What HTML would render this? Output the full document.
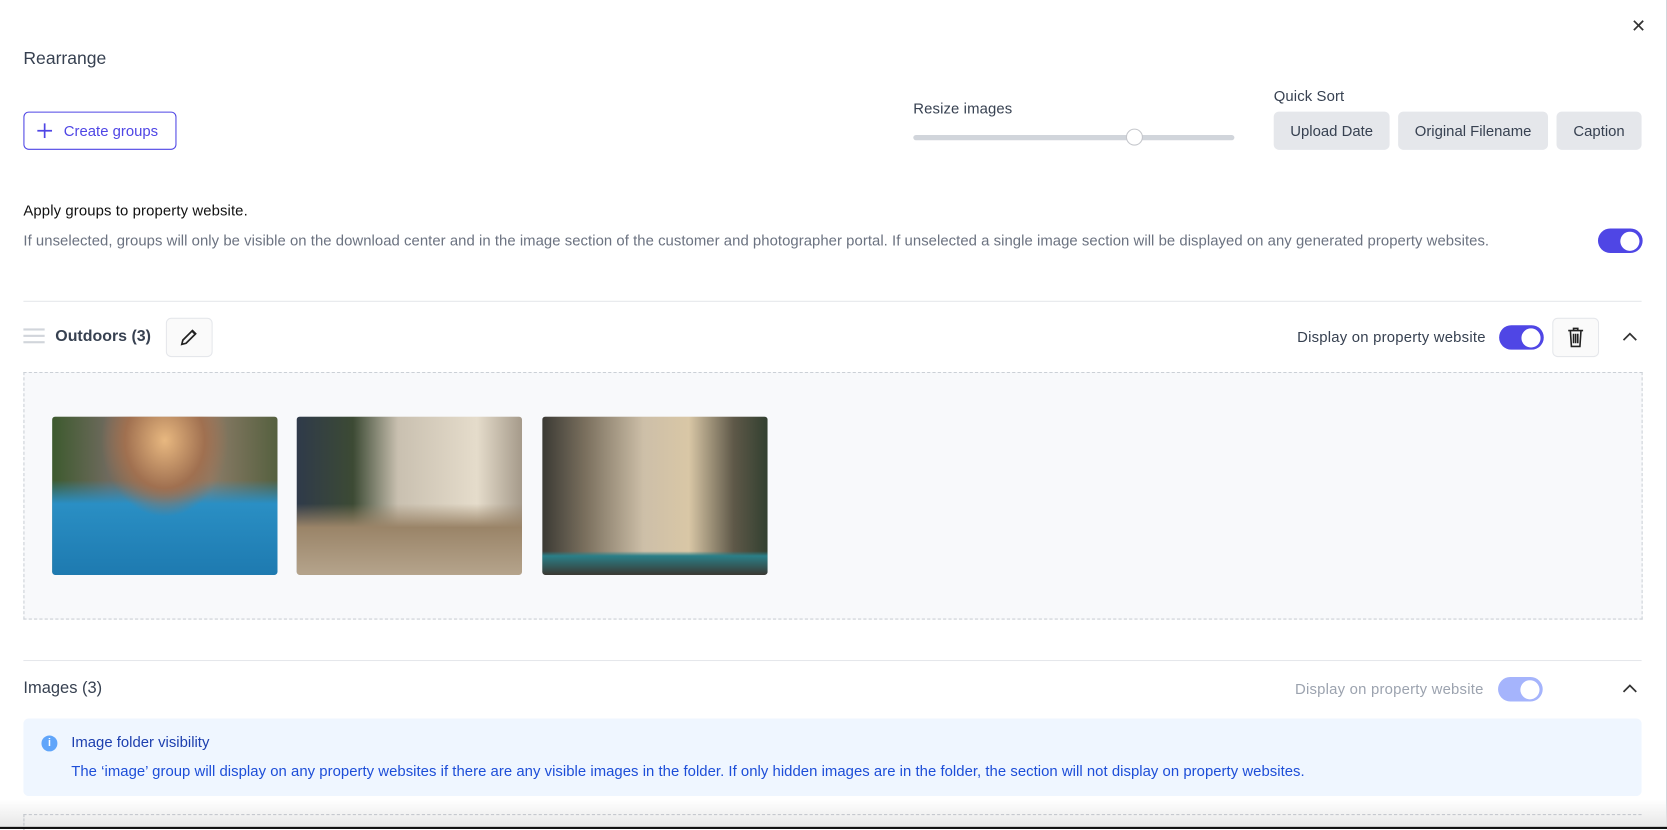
<!DOCTYPE html>
<html><head><meta charset="utf-8"><style>
html,body{margin:0;padding:0;width:1667px;height:829px;overflow:hidden;background:#fff;}
#s{position:absolute;left:0;top:0;width:1568px;height:780px;transform:scale(1.0632,1.0628);transform-origin:0 0;font-family:"Liberation Sans",sans-serif;color:#374151;}
.a{position:absolute;}
.t{font-size:14px;letter-spacing:0.1px;}
.btn{position:absolute;background:#e5e7eb;border-radius:5px;font-size:14px;color:#374151;display:flex;align-items:center;justify-content:center;}
.tog{position:absolute;width:42px;height:23px;border-radius:12px;background:#4f46e5;}
.tog::after{content:"";position:absolute;right:3px;top:2.5px;width:18px;height:18px;border-radius:50%;background:#fff;}
.img{position:absolute;top:392px;width:212px;height:149px;border-radius:3px;overflow:hidden;}
</style></head><body><div id="s">
<div class="a" style="right:0;top:0;width:1px;height:780px;background:#d1d5db"></div>
<div class="a" style="left:1534px;top:15px;font-size:17px;color:#333">✕</div>
<div class="a" style="left:22px;top:46px;font-size:16.5px;color:#374151">Rearrange</div>
<div class="a" style="left:22px;top:105px;width:142px;height:34px;border:1px solid #4f46e5;border-radius:5px;color:#4f46e5;font-size:14px;">
<svg class="a" style="left:12px;top:10px" width="14" height="14" viewBox="0 0 14 14"><path d="M7 0v14M0 7h14" stroke="#4f46e5" stroke-width="1.6"/></svg>
<span class="a" style="left:37px;top:9px">Create groups</span></div>
<div class="a t" style="left:859px;top:94px">Resize images</div>
<div class="a" style="left:859px;top:127px;width:302px;height:5px;border-radius:3px;background:#d1d5db"></div>
<div class="a" style="left:1059px;top:121px;width:14px;height:14px;border-radius:50%;background:#fff;border:1px solid #c5c7cc"></div>
<div class="a t" style="left:1198px;top:82px">Quick Sort</div>
<div class="btn" style="left:1198px;top:105px;width:109px;height:36px">Upload Date</div>
<div class="btn" style="left:1315px;top:105px;width:141px;height:36px">Original Filename</div>
<div class="btn" style="left:1464px;top:105px;width:80px;height:36px">Caption</div>
<div class="a t" style="left:22px;top:190px;color:#111">Apply groups to property website.</div>
<div class="a" style="left:22px;top:218px;font-size:14px;letter-spacing:0.04px;color:#6b7280;white-space:nowrap">If unselected, groups will only be visible on the download center and in the image section of the customer and photographer portal. If unselected a single image section will be displayed on any generated property websites.</div>
<div class="tog" style="left:1503px;top:215px"></div>
<div class="a" style="left:22px;top:283px;width:1522px;height:1px;background:#e5e7eb"></div>
<div class="a" style="left:22px;top:309px;width:20px;height:2px;background:#d1d5db;box-shadow:0 6px 0 #d1d5db,0 12px 0 #d1d5db"></div>
<div class="a" style="left:52px;top:308px;font-size:15px;font-weight:bold;color:#374151">Outdoors (3)</div>
<div class="a" style="left:156px;top:299px;width:42px;height:35px;border:1px solid #e5e7eb;border-radius:5px;background:#fafafa">
<svg class="a" style="left:12px;top:8px" width="18" height="18" viewBox="0 0 18 18"><path d="M2 16l1-4L12 3l3 3-9 9z" fill="none" stroke="#222" stroke-width="1.6"/><path d="M11 4l3 3L15.5 5.5l-3-3z" fill="#222"/></svg></div>
<div class="a" style="left:1220px;top:309px;font-size:14px;letter-spacing:0.2px;color:#374151">Display on property website</div>
<div class="tog" style="left:1410px;top:306px"></div>
<div class="a" style="left:1460px;top:299px;width:42px;height:35px;border:1px solid #e5e7eb;border-radius:5px;background:#fafafa">
<svg class="a" style="left:13px;top:8px" width="16" height="19" viewBox="0 0 16 19"><path d="M1 3h14M6 3V1h4v2M3 3l1 15h8l1-15M6 6v9M8 6v9M10 6v9" fill="none" stroke="#222" stroke-width="1.5"/></svg></div>
<svg class="a" style="left:1526px;top:312px" width="14" height="9" viewBox="0 0 14 9"><path d="M1 8l6-6 6 6" fill="none" stroke="#333" stroke-width="1.6"/></svg>
<div class="a" style="left:22px;top:350px;width:1521px;height:231px;border:1px dashed #cbd0d6;background:#f8f9fb"></div>
<div class="img" style="left:49px;background:radial-gradient(ellipse at 50% 15%,#e8b880 0,#a07050 25%,transparent 40%),linear-gradient(180deg,transparent 40%,#2a8fc4 55%,#1e7ab0 100%),linear-gradient(90deg,#3d5a2e 0,#6f6a5e 25%,#8c7c68 70%,#55603f 100%)"></div>
<div class="img" style="left:279px;background:linear-gradient(180deg,transparent 55%,#9a8468 70%,#b5a48c 100%),linear-gradient(90deg,#2f3a4a 0,#3c4a34 25%,#c9c0b0 45%,#e5dccb 80%,#a59a8a 100%)"></div>
<div class="img" style="left:510px;background:linear-gradient(180deg,transparent 85%,#2a7f88 88%,#3a3832 100%),linear-gradient(90deg,#3b3a34 0,#7d7260 20%,#cdbfa8 45%,#d9c7a6 65%,#5e5848 85%,#324030 100%)"></div>
<div class="a" style="left:22px;top:621px;width:1522px;height:1px;background:#e5e7eb"></div>
<div class="a" style="left:22px;top:639px;font-size:15.5px;color:#374151">Images (3)</div>
<div class="a" style="left:1218px;top:640px;font-size:14px;letter-spacing:0.2px;color:#9ca3af">Display on property website</div>
<div class="tog" style="left:1409px;top:637px;background:#a5b4fc"></div>
<svg class="a" style="left:1526px;top:643px" width="14" height="9" viewBox="0 0 14 9"><path d="M1 8l6-6 6 6" fill="none" stroke="#333" stroke-width="1.6"/></svg>
<div class="a" style="left:22px;top:676px;width:1522px;height:73px;border-radius:5px;background:#eff6ff"></div>
<div class="a" style="left:39px;top:692px;width:15px;height:15px;border-radius:50%;background:#60a5fa;color:#fff;font-size:10px;font-weight:bold;text-align:center;line-height:15px">i</div>
<div class="a" style="left:67px;top:690px;font-size:14px;color:#1e40af">Image folder visibility</div>
<div class="a" style="left:67px;top:717px;font-size:14px;letter-spacing:0.03px;color:#1d4ed8;white-space:nowrap">The ‘image’ group will display on any property websites if there are any visible images in the folder. If only hidden images are in the folder, the section will not display on property websites.</div>
<div class="a" style="left:0;top:752px;width:1568px;height:28px;background:linear-gradient(180deg,rgba(255,255,255,0),#e5e5e5)"></div>
<div class="a" style="left:22px;top:766px;width:1521px;height:14px;border-top:1px dashed #c0c4ca;border-left:1px dashed #c0c4ca"></div>
<div class="a" style="left:0;top:778px;width:1568px;height:2px;background:#111"></div>
</div></body></html>
